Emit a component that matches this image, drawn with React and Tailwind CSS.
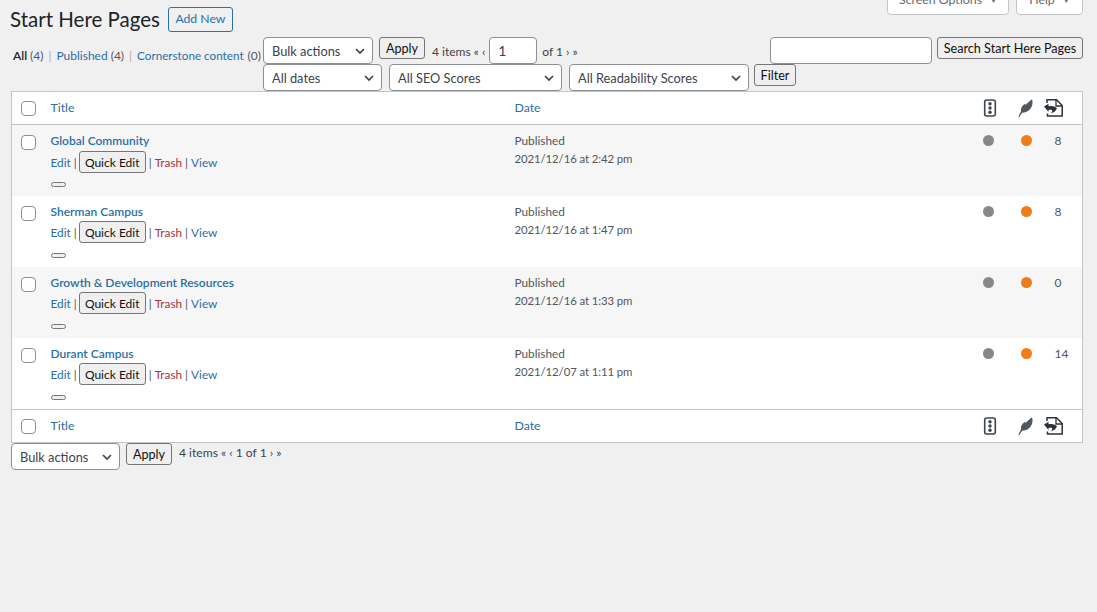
import React from "react";

const rows = [
  { title: "Global Community", date: "2021/12/16 at 2:42 pm", links: "8" },
  { title: "Sherman Campus", date: "2021/12/16 at 1:47 pm", links: "8" },
  { title: "Growth & Development Resources", date: "2021/12/16 at 1:33 pm", links: "0" },
  { title: "Durant Campus", date: "2021/12/07 at 1:11 pm", links: "14" },
];

const Chevron = () => (
  <svg width="12" height="12" viewBox="0 0 12 12" fill="none" stroke="#3c434a" strokeWidth="1.7">
    <path d="M2 4l4 4 4-4" />
  </svg>
);

const Select = ({ label, className }) => (
  <button className={`flex h-[27px] items-center justify-between whitespace-nowrap rounded-[4px] border border-[#8c8f94] bg-white pl-[8px] pr-[6px] text-[12.800px] text-[#3c434a] ${className}`}>
    <span className="pt-[2px]">{label}</span>
    <Chevron />
  </button>
);

const Button = ({ children, className = "" }) => (
  <button className={`h-[22px] whitespace-nowrap rounded-[3px] border border-[#767676] bg-[#efefef] px-0 pt-px text-[12.600px] leading-[20px] text-[#111] ${className}`}>
    {children}
  </button>
);

const Checkbox = () => (
  <span className="block h-[15px] w-[15px] rounded-[4px] border border-[#8c8f94] bg-white" />
);

const TrafficIcon = () => (
  <svg width="14" height="18" viewBox="0 0 14 18" className="block">
    <rect x="1.700" y="1" width="10.600" height="16" rx="2" fill="none" stroke="#3c434a" strokeWidth="1.600" />
    <circle cx="7" cy="4.800" r="1.700" fill="#3c434a" />
    <circle cx="7" cy="9" r="1.700" fill="#3c434a" />
    <circle cx="7" cy="13.200" r="1.700" fill="#3c434a" />
  </svg>
);

const FeatherIcon = () => (
  <svg width="15" height="18" viewBox="0 0 15 18" className="block">
    <path d="M.3 18C1.200 15.800 2 14.200 3 12.800 2.500 9.800 3.800 6.800 7 4.800L7.700 6C9 4 11.500 2.500 14 .2 15.200 4 14.300 8 11.800 10.500 9.500 12.800 6.800 13.800 4.300 13.800 3.200 15 2.100 16.500 1.300 18Z" fill="#50575e" />
  </svg>
);

const LinksIcon = () => (
  <svg width="19" height="18" viewBox="0 0 19 18" className="block" fill="none">
    <path d="M3 4V.8h9.500l5.700 5.700V17H3.500v-2.500" stroke="#2c3338" strokeWidth="1.500" />
    <path d="M12 1v6h6" stroke="#2c3338" strokeWidth="1.300" />
    <path d="M0 7.500L4.500 4.800v2.500c3-.8 6-.3 8.500 2-1.200 2.800-3.500 4.700-6.500 5.200 1.500-1 2-2.300 1.500-3.500-1-.3-2.200-.3-3.500-.1V13Z" fill="#2c3338" />
  </svg>
);

const HeaderRow = ({ border }) => (
  <tr className={`h-[33px] bg-white ${border}`}>
    <td className="pl-[9px]"><Checkbox /></td>
    <td className="pl-[10px] pt-px text-[12.300px] text-[#2a6ea5]">Title</td>
    <td className="pl-[10px] pt-px text-[12.300px] text-[#2a6ea5]">Date</td>
    <td className="pl-[10px]"><TrafficIcon /></td>
    <td className="pl-[6px]"><FeatherIcon /></td>
    <td className="pl-0"><LinksIcon /></td>
  </tr>
);

const Dot = ({ color }) => <span className={`block h-[11px] w-[11px] rounded-full ${color}`} />;

export default function App() {
  return (
    <div className="min-h-[612px] bg-[#f0f0f1] pl-[11px] pr-[14px] font-['Lato','Open_Sans',sans-serif] text-[13px] text-[#3c434a]">
      {/* screen options tabs, cut off by the top of the window */}
      <div className="flex h-[15px] items-end justify-end gap-[7px] overflow-hidden">
        <button className="flex h-[30px] w-[122px] shrink-0 items-center justify-center gap-[8px] rounded-b-[4px] border border-[#c3c4c7] bg-white text-[12.300px] text-[#646970]">
          Screen Options <span className="text-[7px]">▼</span>
        </button>
        <button className="flex h-[30px] w-[67px] shrink-0 items-center justify-center gap-[8px] rounded-b-[4px] border border-[#c3c4c7] bg-white text-[12.300px] text-[#646970]">
          Help <span className="text-[7px]">▼</span>
        </button>
      </div>

      <div className="-mt-[8px] flex h-[24px] items-center">
        <h1 className="-ml-[1px] text-[20.500px] leading-[24px] text-[#1d2327]">Start Here Pages</h1>
        <button className="ml-[8px] h-[25px] w-[65px] rounded-[3px] border border-[#2271b1] pt-px text-[12.200px] text-[#2271b1]">Add New</button>
      </div>

      <div className="mt-[6px] flex">
        <div className="flex h-[26px] w-[252px] shrink-0 items-center whitespace-nowrap pt-[11px] pl-[2px] text-[12px]">
          <span className="font-semibold text-[#1d2327]">All</span>
          <span className="ml-[3px] text-[#50575e]">(4)</span>
          <span className="mx-[5px] text-[#a7aaad]">|</span>
          <span className="text-[#2a6ea5]">Published</span>
          <span className="ml-[3px] text-[#50575e]">(4)</span>
          <span className="mx-[5px] text-[#a7aaad]">|</span>
          <span className="text-[11.700px] text-[#2a6ea5]">Cornerstone content</span>
          <span className="ml-[4px] text-[#50575e]">(0)</span>
        </div>
        <div className="flex-1">
          <div className="flex items-start">
            <Select label="Bulk actions" className="w-[110px]" />
            <Button className="ml-[6px] w-[46px]">Apply</Button>
            <span className="ml-[7px] mt-[6px] text-[12px]">4 items « ‹</span>
            <div className="ml-[4px] flex h-[27px] w-[48px] items-center rounded-[4px] border border-[#8c8f94] bg-white pl-[8px] text-[14px]">1</div>
            <span className="ml-[5px] mt-[6px] text-[12px]">of 1 › »</span>
            <div className="ml-auto h-[27px] w-[162px] rounded-[4px] border border-[#8c8f94] bg-white" />
            <Button className="ml-[5px] w-[146px]">Search Start Here Pages</Button>
          </div>
          <div className="flex items-start">
            <Select label="All dates" className="w-[119px]" />
            <Select label="All SEO Scores" className="ml-[7px] w-[173px]" />
            <Select label="All Readability Scores" className="ml-[7px] w-[180px]" />
            <Button className="ml-[5px] w-[42px]">Filter</Button>
          </div>
        </div>
      </div>

      <table className="w-full table-fixed border-collapse border border-[#c3c4c7]">
        <colgroup>
          <col className="w-[29px]" />
          <col className="w-[464px]" />
          <col />
          <col className="w-[39px]" />
          <col className="w-[32px]" />
          <col className="w-[39px]" />
        </colgroup>
        <thead>
          <HeaderRow border="border-b border-[#c3c4c7]" />
        </thead>
        <tbody>
          {rows.map((row, i) => (
            <tr key={row.title} className={`h-[71px] align-top last:h-[72px] ${i % 2 === 0 ? "bg-[#f6f6f6]" : "bg-white"}`}>
              <td className="pl-[9px] pt-[10px]"><Checkbox /></td>
              <td className="pl-[10px] pt-[7px]">
                <div className="text-[12px] leading-[18px] font-semibold text-[#2a6ea5]">{row.title}</div>
                <div className="mt-px flex h-[21px] items-center whitespace-nowrap text-[11.800px] text-[#2a6ea5]">
                  <span className="pt-[2px]">Edit</span>
                  <span className="ml-[3px] pt-[2px] text-[#50575e]">|</span>
                  <Button className="ml-[2px] h-[21px] w-[67px] text-[12px]">Quick Edit</Button>
                  <span className="ml-[3px] pt-[2px] text-[#50575e]">|</span>
                  <span className="ml-[3px] pt-[2px] text-[#a83240]">Trash</span>
                  <span className="ml-[3px] pt-[2px] text-[#50575e]">|</span>
                  <span className="ml-[3px] pt-[2px]">View</span>
                </div>
                <span className="mt-[10px] block h-[5px] w-[15px] rounded-[3px] border border-[#767676] bg-[#efefef]" />
              </td>
              <td className="pl-[10px] pt-[7px] text-[11.800px] leading-[18px] text-[#50575e]">
                Published
                <br />
                <span className="text-[11.400px] tracking-[-0.1px]">{row.date}</span>
              </td>
              <td className="pl-[10px] pt-[10px]"><Dot color="bg-[#888888]" /></td>
              <td className="pl-[9px] pt-[10px]"><Dot color="bg-[#ee7c1b]" /></td>
              <td className="pl-[11px] pt-[7px] text-[12px] leading-[18px] text-[#50575e]">{row.links}</td>
            </tr>
          ))}
        </tbody>
        <tfoot>
          <HeaderRow border="border-t border-[#c3c4c7]" />
        </tfoot>
      </table>

      <div className="flex items-start">
        <Select label="Bulk actions" className="w-[109px]" />
        <Button className="ml-[6px] w-[46px]">Apply</Button>
        <span className="ml-[7px] mt-px text-[12.100px]">4 items « ‹ 1 of 1 › »</span>
      </div>
    </div>
  );
}
